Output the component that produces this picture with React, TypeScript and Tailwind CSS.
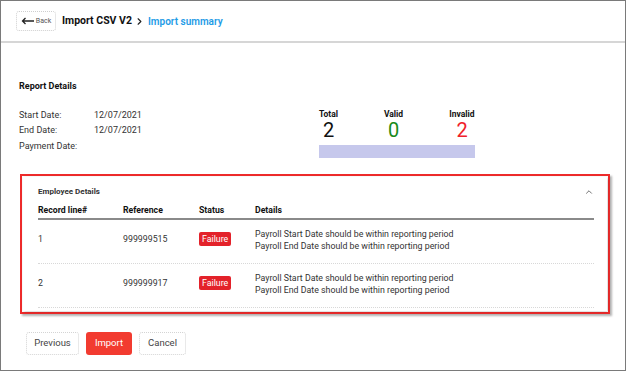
import { ChevronRight, ChevronUp } from "lucide-react";

const rows = [
  { line: "1", reference: "999999515" },
  { line: "2", reference: "999999917" },
];

const stats = [
  { label: "Total", value: "2", width: "w-[19px]", color: "text-[#111]" },
  { label: "Valid", value: "0", width: "w-[20px]", color: "text-[#1a8a1a]" },
  { label: "Invalid", value: "2", width: "w-[26px]", color: "text-[#f0222b]" },
];

const BackArrow = () => (
  <svg width="14" height="8" viewBox="0 0 14 8" fill="none" stroke="#222" strokeWidth="1.3">
    <path d="M13 4H1.5M4.5 1L1.5 4l3 3" />
  </svg>
);

const App = () => {
  return (
    <div
      className="w-[626px] h-[371px] bg-white border border-[#7a7a7a] flex flex-col text-[#333]"
      style={{ fontFamily: "Roboto, 'Liberation Sans', sans-serif" }}
    >
      <div className="h-[42px] shrink-0 border-b-2 border-[#d6d6d6] flex items-center pl-[15px]">
        <div className="h-[20px] w-[40px] border border-dotted border-[#cfcfcf] rounded-[3px] flex items-center justify-center gap-[1px]">
          <BackArrow />
          <span className="text-[7px] text-[#555]">Back</span>
        </div>
        <span className="ml-[6px] text-[10.5px] font-bold text-[#111]">Import CSV V2</span>
        <ChevronRight className="ml-[2px] w-[11px] h-[11px] text-[#222]" strokeWidth={2.5} />
        <span className="ml-[3px] text-[10px] font-semibold text-[#1e9be6]">Import summary</span>
      </div>

      <div className="flex-1 flex flex-col pl-[18px] pr-[16px]">
        <div className="mt-[37px] text-[9px] font-bold text-[#111]">Report Details</div>

        <div className="flex mt-[16px]">
          <div className="w-[300px] flex flex-col gap-[5px] text-[9px] leading-[10.5px] text-[#333]">
            <div className="flex">
              <span className="w-[75px]">Start Date:</span>
              <span>12/07/2021</span>
            </div>
            <div className="flex">
              <span className="w-[75px]">End Date:</span>
              <span>12/07/2021</span>
            </div>
            <div className="flex">
              <span className="w-[75px]">Payment Date:</span>
              <span></span>
            </div>
          </div>
          <div className="flex flex-col w-[156px]">
            <div className="flex justify-between">
              {stats.map((s) => (
                <div key={s.label} className={`${s.width} flex flex-col items-center`}>
                  <span className="text-[8.5px] font-bold leading-[9px] text-[#111] whitespace-nowrap">{s.label}</span>
                  <span className={`text-[20px] leading-[22px] ${s.color}`}>{s.value}</span>
                </div>
              ))}
            </div>
            <div className="mt-[4px] h-[13px] bg-[#c6c8ec]" />
          </div>
        </div>

        <div className="mt-[16px] ml-[1px] w-[590px] h-[140px] border-2 border-[#ee2b2b] shadow-[2px_2px_2px_rgba(0,0,0,0.3)] p-[1px]">
          <div className="h-full bg-white shadow-[1px_1px_3px_rgba(0,0,0,0.18)] pl-[15px] pr-[11px] flex flex-col">
            <div className="flex items-center justify-between mt-[9px]">
              <span className="text-[8px] font-bold text-[#333]">Employee Details</span>
              <ChevronUp className="w-[10px] h-[10px] text-[#555] mr-[2px]" strokeWidth={2} />
            </div>
            <div className="mt-[6px] flex text-[8.7px] font-bold text-[#111] pb-[1px] border-b-2 border-[#8a8a8a] mr-[2px]">
              <span className="w-[85px]">Record line#</span>
              <span className="w-[76px]">Reference</span>
              <span className="w-[56px]">Status</span>
              <span>Details</span>
            </div>
            {rows.map((row) => (
              <div
                key={row.line}
                className="h-[44px] pb-[3px] flex items-center text-[8.8px] text-[#333] border-b border-dotted border-[#d8d8d8] mr-[2px]"
              >
                <span className="w-[85px]">{row.line}</span>
                <span className="w-[76px]">{row.reference}</span>
                <span className="w-[56px]">
                  <span className="inline-block bg-[#e3222a] text-white text-[8.8px] leading-[14px] px-[3px] rounded-[2px]">
                    Failure
                  </span>
                </span>
                <div className="flex flex-col leading-[12px]">
                  <span>Payroll Start Date should be within reporting period</span>
                  <span>Payroll End Date should be within reporting period</span>
                </div>
              </div>
            ))}
          </div>
        </div>

        <div className="mt-[18px] ml-[7px] flex gap-[7px] text-[9.5px]">
          <button className="w-[53px] h-[23px] border border-dotted border-[#d4d4d4] rounded-[3px] text-[#444] bg-white">
            Previous
          </button>
          <button className="w-[46px] h-[23px] rounded-[3px] text-white bg-[#f23b30]">Import</button>
          <button className="w-[47px] h-[23px] border border-dotted border-[#d4d4d4] rounded-[3px] text-[#444] bg-white">
            Cancel
          </button>
        </div>
      </div>
    </div>
  );
};

export default App;
